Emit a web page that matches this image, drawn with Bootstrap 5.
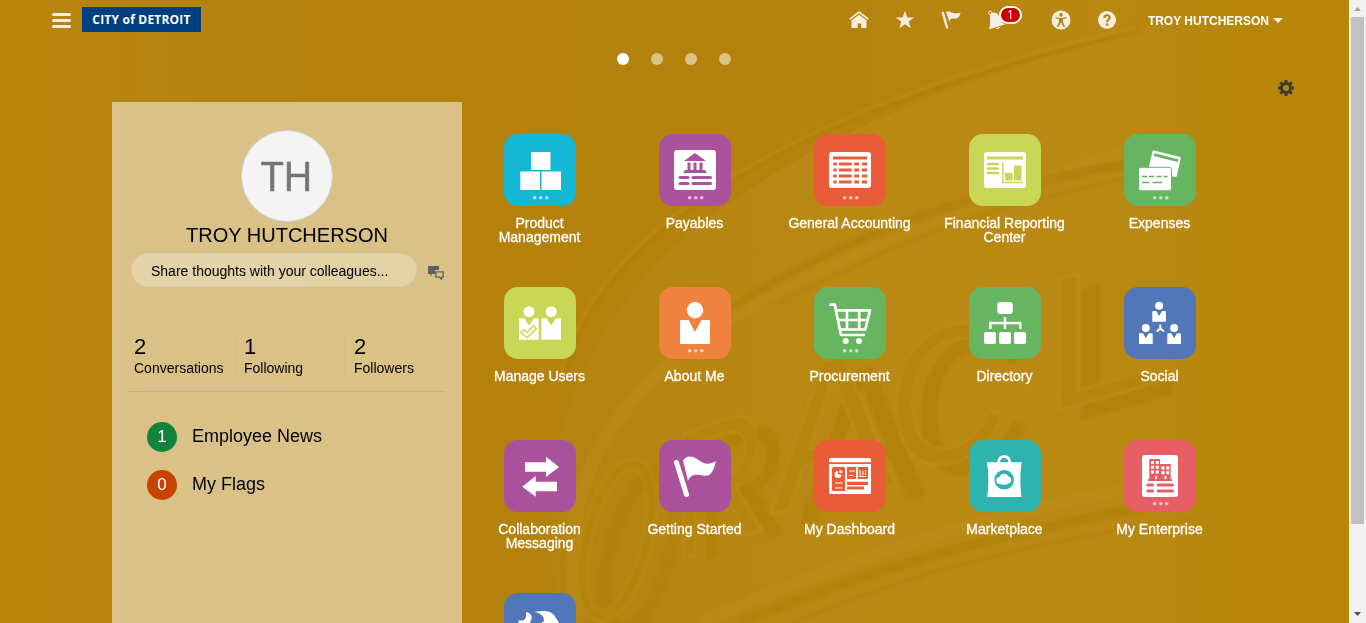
<!DOCTYPE html>
<html lang="en">
<head>
<meta charset="utf-8">
<meta name="viewport" content="width=device-width, initial-scale=1">
<title>Home</title>
<link href="https://cdn.jsdelivr.net/npm/bootstrap@5.3.0/dist/css/bootstrap.min.css" rel="stylesheet">
<style>
body{font-family:"Liberation Sans",sans-serif;background:#b8860b;color:#000;height:623px}
a{color:inherit;text-decoration:none}
.backdrop{position:absolute;inset:0;z-index:0}
.page{position:relative;z-index:1}
.topbar{height:40px;padding:0 66px 0 52px}
.brand-box{width:119px;height:25px;margin:0 0 2px 11px;background:#003f7f;color:#fff;font:700 12px/25px "Open Sans",sans-serif;letter-spacing:.2px;text-align:center;white-space:nowrap}
.tools{color:#f5eedf}
.tool{width:20px;height:20px;display:block}
.count{position:absolute;left:12px;top:-4px;width:23px;height:18px;border:2px solid #fff;border-radius:9px;background:#c00;color:#fff;font:12px/14px "Open Sans",sans-serif;text-align:center}
.user-menu{color:#fff;font-weight:700;font-size:12px;line-height:20px;margin-left:31px;padding-top:1px}
.caret{border:5px solid transparent;border-top-color:#f5eedf;border-bottom:0;margin-left:4px}
.pager{height:38px;gap:22px;padding-right:2px}
.pager i{width:12px;height:12px;border-radius:50%;background:#dbc285}
.pager i.on{background:#fff}
.gear-row{height:24px;padding-right:55px}
.me{width:350px;height:521px;margin-left:112px;background:rgba(255,255,255,.5)}
.avatar{width:92px;height:92px;border-radius:50%;border:1px solid #d0d0d4;background:#f4f4f4;color:#757575;font:40px/90px "Open Sans",sans-serif;-webkit-text-stroke:.7px #757575;margin-top:28px}
.me-name{font-size:20px;line-height:24px;margin-top:1px;margin-bottom:1px}
.share{width:286px;height:34px;border-radius:17px;border:1px solid #dccdaa;background:rgba(255,255,255,.28);font-size:14px;line-height:34px;padding-left:19px}
.stats{margin:49px 0 0 22px}
.stat{width:110px;font-size:14px;line-height:17px}
.stat + .stat{border-left:1px solid #cdb88e;padding-left:8px}
.stat b{display:block;font-weight:400;font-size:22px;line-height:21px;margin-bottom:3px}
.stat-first{width:101px}
.rule{height:1px;background:#c2b398;margin:14px 17px 0 16px}
.notice{font-size:18px;line-height:30px;padding-left:35px}
.pill{width:30px;height:30px;border-radius:50%;color:#fff;font-size:17px;line-height:30px;text-align:center;margin-right:15px}
.pill.green{background:#12833a}.pill.rust{background:#c84200}
.apps{width:775px;height:521px;padding-top:32px;display:grid;grid-template-columns:repeat(5,155px);grid-auto-rows:153px;overflow:hidden}
.app{color:#fff;font-size:14px;line-height:14px;text-align:center;-webkit-text-stroke:.3px #fff}
.app svg{display:block;margin:0 0 10px 42px;border-radius:14px;fill:#fff}
.cyan{background:#14b8d4;color:#14b8d4}.plum{background:#aa529b;color:#aa529b}.red{background:#ea5b38;color:#ea5b38}
.lime{background:#c8d757;color:#c8d757}.green-t{background:#67b461;color:#67b461}.orange{background:#ee823e;color:#ee823e}
.blue{background:#5177b8;color:#5177b8}.teal{background:#2eb3ae;color:#2eb3ae}.rose{background:#e95d65;color:#e95d65}
.scroller{width:17px;background:#f1f1f1}
.thumb{width:13px;height:507px;background:#c1c1c1}
</style>
</head>
<body class="d-flex overflow-hidden">
<svg width="0" height="0" class="position-absolute"><defs>
<g id="dots" fill="#fff" opacity=".65"><circle cx="30.7" cy="63.7" r="1.8"/><circle cx="36.8" cy="63.7" r="1.8"/><circle cx="42.8" cy="63.7" r="1.8"/></g>
<g id="mini"><circle cx="6.8" cy="4" r="4"/><path d="M1 9.3H4L6.8 14.3 9.7 9.3H12.5Q13.7 9.3 13.7 10.5V20H0V10.3Q0 9.3 1 9.3Z"/></g>
</defs></svg>

<div class="position-relative" style="width:1349px;height:623px">
<svg class="backdrop" width="1349" height="623" fill="none" aria-hidden="true">
  <defs>
    <linearGradient id="wall" x1="0" x2="1"><stop offset="0" stop-color="#b8860b"/><stop offset=".15" stop-color="#b4820f"/><stop offset=".35" stop-color="#b4820f"/><stop offset=".62" stop-color="#b98914"/><stop offset=".82" stop-color="#b98914"/><stop offset=".92" stop-color="#b8860b"/><stop offset="1" stop-color="#b8860b"/></linearGradient>
    <linearGradient id="shade" gradientUnits="userSpaceOnUse" x1="300" x2="1250" y1="0" y2="0"><stop offset="0" stop-color="#b4820c"/><stop offset=".6" stop-color="#b4820c" stop-opacity=".8"/><stop offset="1" stop-color="#b8860b" stop-opacity="0"/></linearGradient>
    <filter id="soft"><feGaussianBlur stdDeviation="1"/></filter>
  </defs>
  <rect width="1349" height="623" fill="url(#wall)"/>
  <path d="M560 623C520 380 610 170 1140 30L1250 0H300V623Z" fill="url(#shade)"/>
  <g filter="url(#soft)">
    <path d="M566 374C600 230 800 110 1140 31" stroke="#ad7d0a" stroke-width="2" opacity=".7"/>
    <path d="M562 370C597 226 797 106 1136 27" stroke="#be8f19" stroke-width="4" opacity=".4"/>
    <path d="M577 623C540 410 690 290 1130 150" stroke="#be8e17" stroke-width="14" opacity=".4"/>
    <path d="M680 345C800 250 970 190 1130 163" stroke="#ad7c0a" stroke-width="9" opacity=".5"/>
    <path d="M780 303C900 240 990 205 1130 178" stroke="#ad7c0a" stroke-width="1.5" opacity=".5"/>
    <path d="M700 623C850 555 1010 505 1190 480" stroke="#be8e17" stroke-width="13" opacity=".35"/>
    <path d="M740 623C880 565 1010 530 1190 499" stroke="#ad7c0a" stroke-width="9" opacity=".45"/>
    <path d="M793 623C910 574 1010 545 1190 520" stroke="#ad7c0a" stroke-width="1.5" opacity=".5"/>
    <path d="M680 235V350M745 90V620M805 180V620M860 60V620M922 210V623M985 70V620M1062 45V560M1125 40V520" stroke="#b0800c" stroke-width="1" opacity=".3"/>
    <!-- raised sign lettering with its cast shadow -->
    <g transform="rotate(14 617 540)">
      <ellipse cx="642" cy="546" rx="30" ry="78" stroke="#ab7b09" stroke-width="14" opacity=".3"/>
      <ellipse cx="617" cy="540" rx="30" ry="78" stroke="#bf9020" stroke-width="13" opacity=".45"/>
      <ellipse cx="617" cy="540" rx="30" ry="78" stroke="#b5840f" stroke-width="8"/>
    </g>
    <g font-family="Liberation Sans" font-size="100" text-anchor="middle">
      <g fill="#ab7b09" opacity=".45">
        <text transform="translate(742,548) skewY(-20) scale(1.3,1.7)">R</text>
        <text transform="translate(862,510) skewY(-13) scale(1.9,2.05)">A</text>
        <text transform="translate(972,472) skewY(-14) scale(1.65,1.95)">C</text>
        <text transform="translate(1122,408) skewY(-16) scale(2.1,1.9)">L</text>
      </g>
      <g fill="#b68510" stroke="#c09222" stroke-width="1.5" stroke-opacity=".45">
        <text transform="translate(720,545) skewY(-20) scale(1.3,1.8)">R</text>
        <text transform="translate(833,500) skewY(-13) scale(1.9,2.05)">A</text>
        <text transform="translate(948,462) skewY(-14) scale(1.65,1.95)">C</text>
        <text transform="translate(1100,398) skewY(-16) scale(2.1,1.9)">L</text>
      </g>
    </g>
  </g>
</svg>
<main class="page">
  <nav class="topbar d-flex align-items-center">
    <svg width="19" height="15" stroke="#f5eedf" stroke-width="3" stroke-linecap="round"><path d="M1.5 1.5H17.5M1.5 7.5H17.5M1.5 13.5H17.5"/></svg>
    <div class="brand-box">CITY of DETROIT</div>
    <div class="tools d-flex align-items-center ms-auto">
      <svg class="tool" style="margin-right:26px" viewBox="0 0 20 20" fill="currentColor"><path d="M.8 9.2 10 2l9.2 7.2" fill="none" stroke="currentColor" stroke-width="1.7"/><path d="M2.5 10.2 10 4.8l7.5 5.4V18H12.3V13.5H8.7V18H2.5Z"/></svg>
      <svg class="tool" style="margin-right:26px" viewBox="0 0 20 20" fill="currentColor"><path d="M10 .7 12.3 7.5H19.2L13.7 11.5 15.8 18.2 10 14.2 4.2 18.2 6.3 11.5.8 7.5H7.7Z"/></svg>
      <svg class="tool" style="margin-right:26px" viewBox="0 0 20 20" fill="currentColor"><path d="M1.8 2.8 6 17.5" stroke="currentColor" stroke-width="2.4" stroke-linecap="round"/><path d="M5 2C10 .2 11 5.5 19.6 2.6 18.7 6.5 17.5 9 13.5 8.6 10 8 9 8.8 8.3 11.8Z"/></svg>
      <div class="position-relative" style="margin-right:44px">
        <svg class="tool" viewBox="0 0 20 20" fill="currentColor"><path d="M3 4.5C6 1.5 9.5 2 11.5 5L15.5 12.5 18 14.5 4 18.8H2L3 14.5Z"/><circle cx="3.3" cy="2.8" r="1.7" fill="none" stroke="currentColor"/><path d="M8.5 18.2Q12 20.5 13 16.8Z"/></svg>
        <span class="count">1</span>
      </div>
      <svg class="tool" style="margin-right:26px" viewBox="0 0 20 20"><circle cx="10" cy="10" r="9.5" fill="#f5eedf"/><g fill="#b5830d"><circle cx="10" cy="4.9" r="1.8"/><path d="M4.5 7.3 8.5 8h3l4-.7.2 1-3.7 1V12l2 4.8-1.3.5L10.5 13h-1l-2.200 4.300L6 16.800 8 12V9.300L4.300 8.300Z"/></g></svg>
      <svg class="tool" viewBox="0 0 20 20"><circle cx="10" cy="10" r="9" fill="#f5eedf"/><path d="M7.300 8C7.300 4.300 12.700 4.400 12.700 7.600 12.700 9.600 10 9.500 10 12.300" fill="none" stroke="#b5830d" stroke-width="2.100"/><circle cx="10" cy="14.500" r="1.300" fill="#b5830d"/></svg>
      <a class="user-menu d-flex align-items-center" href="#">TROY HUTCHERSON<i class="caret"></i></a>
    </div>
  </nav>
  <div class="pager d-flex justify-content-center align-items-center"><i class="on"></i><i></i><i></i><i></i></div>
  <div class="gear-row d-flex justify-content-end"><svg width="16" height="16" viewBox="-8 -8 16 16" style="margin-top:2px"><circle r="4.500" fill="none" stroke="#38392c" stroke-width="3"/><path d="M0-8V-4.500M0 8V4.500M-8 0H-4.500M8 0H4.500M-5.700-5.700-3.500-3.500M5.700 5.700 3.500 3.500M-5.700 5.700-3.500 3.500M5.700-5.700 3.500-3.500" stroke="#38392c" stroke-width="3"/></svg></div>
  <div class="d-flex">
    <section class="me d-flex flex-column">
      <div class="avatar align-self-center text-center">TH</div>
      <div class="me-name text-center">TROY HUTCHERSON</div>
      <div class="d-flex" style="margin:5px 0 0 19px">
        <div class="share">Share thoughts with your colleagues...</div>
        <svg width="17" height="16" style="margin:12px 0 0 11px"><path d="M0 1H11V5H7V9H4L2.500 12V9H0Z" fill="#60605e"/><path d="M7.800 6.800H15.200V12.200H13.500V14.200L11.500 12.200H7.800Z" fill="none" stroke="#60605e" stroke-width="1.300"/></svg>
      </div>
      <div class="stats d-flex">
        <div class="stat stat-first"><b>2</b>Conversations</div>
        <div class="stat"><b>1</b>Following</div>
        <div class="stat"><b>2</b>Followers</div>
      </div>
      <div class="rule"></div>
      <div class="notice d-flex" style="margin-top:30px"><span class="pill green">1</span><span style="margin-top:-1px">Employee News</span></div>
      <div class="notice d-flex" style="margin-top:18px"><span class="pill rust">0</span><span style="margin-top:-1px">My Flags</span></div>
    </section>
    <section class="apps">
      <a class="app"><svg class="cyan" width="72" height="72"><path d="M27 18H46.500V36H27ZM16.300 37.500H36V56H16.300ZM37.500 37.500H57V56H37.500Z"/><use href="#dots"/></svg>Product<br>Management</a>
      <a class="app"><svg class="plum" width="72" height="72"><rect x="15" y="16" width="42" height="40" rx="3"/><path fill="currentColor" d="M25 27 36 19 47 27ZM28.500 28.500h3v8h-3ZM34.500 28.500h3v8h-3ZM40.500 28.500h3v8h-3ZM26 36H46L48 39H24Z"/><path d="M21 43.500H29M34 43.500H51.500M21 49.500H29M34 49.500H51.500" stroke="currentColor" stroke-width="3" stroke-linecap="round"/><use href="#dots"/></svg>Payables</a>
      <a class="app"><svg class="red" width="72" height="72"><rect x="15" y="18" width="42" height="36" rx="3"/><path d="M19 24H53" stroke="currentColor" stroke-width="3"/><path d="M19.300 30h3.400m2.300 0h12.700m2.600 0H45m3 0h5M19.300 36h3.400m2.300 0h12.700m2.600 0H45m3 0h5M19.300 42h3.400m2.300 0h12.700m2.600 0H45m3 0h5M19.300 48h3.400m2.300 0h12.700m2.600 0H45m3 0h5" stroke="currentColor" stroke-width="3"/><use href="#dots"/></svg>General Accounting</a>
      <a class="app"><svg class="lime" width="72" height="72"><rect x="15" y="18" width="42" height="36" rx="3"/><path d="M18 24H54" stroke="currentColor" stroke-width="3"/><path d="M19 30H29M19 34.500H29M19 39H29" stroke="currentColor" stroke-width="2.500" stroke-linecap="round"/><path d="M33.800 28.700V48.500H54" fill="none" stroke="currentColor" stroke-width="1.500"/><path fill="currentColor" d="M36 39h7.700v7.500H36ZM45 31.500h7.500v15H45Z"/></svg>Financial Reporting<br>Center</a>
      <a class="app"><svg class="green-t" width="72" height="72"><path d="M30 16.500 55.500 22.700Q57 23 56.700 24.500L52.800 42Q52.500 43.300 51 43L26 37 24.700 34 28.500 17.500Q28.800 16.300 30 16.500Z"/><path d="M30 20.700 54 26.700" stroke="currentColor" stroke-width="2.800"/><rect x="14.500" y="33.300" width="33" height="23.500" rx="2.500" stroke="currentColor"/><path d="M18 42.500h5m2 0h5m2.500 0h5m2 0h4" stroke="currentColor" stroke-width="1.500"/><path d="M18 48.500h7m3.500 0h9.500" stroke="currentColor" stroke-width="1.500"/><use href="#dots"/></svg>Expenses</a>

      <a class="app"><svg class="lime" width="72" height="72"><circle cx="25" cy="24.700" r="5.500"/><circle cx="47.300" cy="24.700" r="5.500"/><path d="M16 31.300H20.500L25 38.500 30 31.300H33.700Q34.700 31.300 34.700 32.300V52.700H15V32.300Q15 31.300 16 31.300ZM38.300 31.300H42.500L47.300 38.500 52 31.300H56Q57 31.300 57 32.300V52.700H37.300V32.300Q37.300 31.300 38.300 31.300Z"/><path d="M16.700 45.500 20 42.700 23 45.500 29.300 38.500 32.300 41.700 23 50.700Z" stroke="currentColor" stroke-width="1.500"/></svg>Manage Users</a>
      <a class="app"><svg class="orange" width="72" height="72"><circle cx="36" cy="23.200" r="8.200"/><path d="M22.500 33H29.500L36 45 42.500 33H49.500Q51 33 51 34.500V55.500Q51 57 49.500 57H22.500Q21 57 21 55.500V34.500Q21 33 22.500 33Z"/><use href="#dots"/></svg>About Me</a>
      <a class="app"><svg class="green-t" width="72" height="72"><g fill="none" stroke="#fff" stroke-width="2.700" stroke-linejoin="round"><path d="M15.500 17.700H20.800L27 48H51M23.500 23.300H56L51.300 42.500H26M33 24V42M45.200 24V42M25 33H54"/></g><circle cx="31.700" cy="54" r="3"/><circle cx="45" cy="54" r="3"/><use href="#dots"/></svg>Procurement</a>
      <a class="app"><svg class="green-t" width="72" height="72"><rect x="28.300" y="15" width="15.500" height="12" rx="3"/><path d="M36 30V42M21.300 42V36H51.300V42" fill="none" stroke="#fff" stroke-width="2.500"/><rect x="15" y="45" width="12" height="12" rx="2"/><rect x="30" y="45" width="12" height="12" rx="2"/><rect x="45" y="45" width="12" height="12" rx="2"/></svg>Directory</a>
      <a class="app"><svg class="blue" width="72" height="72"><use href="#mini" x="28.300" y="14.800"/><use href="#mini" x="15" y="37"/><use href="#mini" x="43.300" y="37"/><path d="M36.300 37.500V41.500L32.700 44.500M36.300 41.500 39.900 44.500" fill="none" stroke="#fff" stroke-width="2"/></svg>Social</a>

      <a class="app"><svg class="plum" width="72" height="72"><path d="M21 22.300H42V16.700L55 26.900 42 37V31.700H21ZM53 41.700H31.700V36L18.300 46.700 31.700 56.700V51.300H53Z"/></svg>Collaboration<br>Messaging</a>
      <a class="app"><svg class="plum" width="72" height="72"><path d="M17.500 22.500 27.500 54.500" stroke="#fff" stroke-width="5" stroke-linecap="round"/><path d="M24 20.500C26 16.500 32 14.500 38 19 45 24.500 50 25 57 21.300 54 32 52 36.500 45 35.800 37 34 32 34 29 41Z"/></svg>Getting Started</a>
      <a class="app"><svg class="red" width="72" height="72"><path d="M17 18H55.500Q57 18 57 20V22.300H15V20Q15 18 17 18ZM15 24H57V52.500Q57 54 55.500 54H16.500Q15 54 15 52.500Z"/><path fill="currentColor" d="M18 28.500Q18 27 19.500 27H29.500Q31 27 31 28.500V51H19.500Q18 51 18 49.500ZM33 27H42V39H33ZM44 27H54V39H44ZM33 41.800H54V45H33ZM33 46.500H50V49.500H33Z"/><path d="M24 31V34.500H27.500A3.500 3.500 0 1 1 24 31ZM25.500 30A3 3 0 0 1 28.500 33H25.500Z"/><path d="M21 43H28.500M21 48H28.500M35 31H41M35 35.500H39M46 30V36.500H52.500M49 31V35M51.500 30V35" fill="none" stroke="#fff" stroke-width="1.100"/></svg>My Dashboard</a>
      <a class="app"><svg class="teal" width="72" height="72"><path d="M29.700 24V22A5.500 5.500 0 0 1 40.700 22V24" fill="none" stroke="#fff" stroke-width="2.800"/><path d="M18 22.300H52.700Q50 39 52.500 57H18.200Q20.700 39 18 22.300Z"/><circle cx="35.200" cy="39.700" r="9.800" fill="currentColor"/><path d="M31 44A3.200 3.200 0 0 1 30.300 37.300 5 5 0 0 1 39.500 36.500 3.500 3.500 0 0 1 39.800 43.300Q35.500 46.500 31 44Z"/></svg>Marketplace</a>
      <a class="app"><svg class="rose" width="72" height="72"><rect x="18" y="15" width="36" height="42" rx="3"/><path fill="currentColor" d="M25.300 19H36V24H46.700V39H48V41H24V39H25.300Z"/><path d="M27 21h3v3h-3ZM31.800 21h3v3h-3ZM27 25.800h3v3h-3ZM31.800 25.800h3v3h-3ZM27 30.600h3v3h-3ZM31.800 30.600h3v3h-3ZM37.500 26.500h3v3h-3ZM42.300 26.500h3v3h-3ZM37.500 31.300h3v3h-3ZM42.300 31.300h3v3h-3ZM31 36h2v3h-2ZM40.500 36h2v3h-2Z"/><path d="M23.800 45H28.500M34.300 45H48.500M23.800 51H28.500M34.300 51H48.500" stroke="currentColor" stroke-width="3" stroke-linecap="round"/><use href="#dots"/></svg>My Enterprise</a>

      <a class="app"><svg class="blue" width="72" height="72"><path d="M14.300 27.500C14 31 17 33 21 32L46 58 50 54 26 29C29 25 28 20 22 19V24.500L19.500 27.500ZM30.500 19C42 17 46 18 50 22L55 29.500 51 33 47 30 36 40 31 35 40 28C40 23 37 20.500 30.500 19Z"/></svg></a>
    </section>
  </div>
</main>
</div>
<aside class="scroller d-flex flex-column align-items-center flex-shrink-0" style="height:623px" aria-hidden="true">
  <svg width="17" height="17"><path d="M5 11 8.500 7 12 11Z" fill="#a3a3a3"/></svg>
  <div class="thumb"></div>
  <svg class="mt-auto" width="17" height="17"><path d="M5 6 8.500 10 12 6Z" fill="#505050"/></svg>
</aside>
<script src="https://cdn.jsdelivr.net/npm/bootstrap@5.3.0/dist/js/bootstrap.bundle.min.js"></script>
</body>
</html>
